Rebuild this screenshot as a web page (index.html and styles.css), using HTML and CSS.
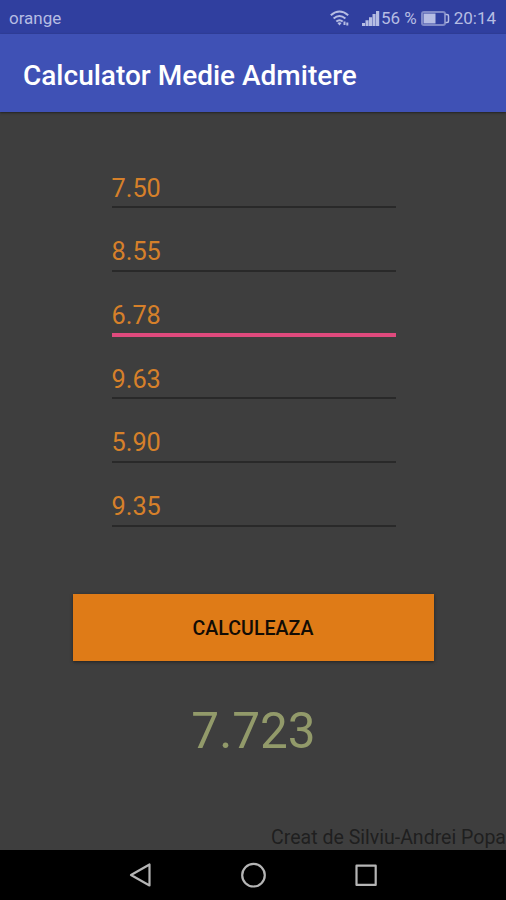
FILE: index.html
```html
<!DOCTYPE html>
<html lang="ro">
<head>
<meta charset="utf-8">
<title>Calculator Medie Admitere</title>
<link rel="stylesheet" href="styles.css">
</head>
<body>
<div class="screen">
  <div class="status-bar">
    <span class="carrier">orange</span>
    <svg class="wifi" width="20" height="16" viewBox="0 0 20 16" fill="none" stroke="currentColor" stroke-width="2">
      <path d="M.8 5.200Q9.500-2.200 18.200 5.200M3.600 8.500Q9.500 3.400 15.400 8.500M6.300 11.600Q9.500 8.800 12.700 11.600"/>
      <path d="M7.400 13L9.500 15.600L11.600 13Q9.500 11.700 7.400 13Z" fill="currentColor" stroke="none"/>
      <path d="M14.500 11.500V15M17.300 12.500V15.500" stroke-width="2"/>
    </svg>
    <svg class="signal" width="18" height="16" viewBox="0 0 18 16" fill="currentColor">
      <path d="M0 13h3v3H0zM3.500 10.300h3.100V16H3.500zM7 7.200h3.100V16H7zM10.500 4h3.100v12h-3.100zM14 1h3.200v15H14z"/>
    </svg>
    <span class="percent">56 %</span>
    <svg class="battery" width="29" height="15" viewBox="0 0 29 15">
      <rect x="1" y="1" width="23" height="13" rx="2" fill="none" stroke="currentColor" stroke-width="2" opacity=".6"/>
      <rect x="2.500" y="2.500" width="12" height="10" fill="currentColor"/>
      <path d="M24.500 3.500h1.500q1.500 0 1.500 1.500v5q0 1.500-1.500 1.500h-1.500" fill="none" stroke="currentColor" stroke-width="1.500"/>
    </svg>
    <span class="clock">20:14</span>
  </div>
  <header class="app-bar"><h1 class="title">Calculator Medie Admitere</h1></header>
  <main class="content">
    <div class="fields">
      <div class="field">7.50</div>
      <div class="field">8.55</div>
      <div class="field focused">6.78</div>
      <div class="field">9.63</div>
      <div class="field">5.90</div>
      <div class="field">9.35</div>
    </div>
    <button class="calculate" type="button">CALCULEAZA</button>
    <div class="result">7.723</div>
    <div class="credit">Creat de Silviu-Andrei Popa</div>
  </main>
  <nav class="nav-bar">
    <svg width="26" height="26" viewBox="0 0 26 26"><path d="M22.500 2.500V23.500L4 13Z"/></svg>
    <svg width="26" height="26" viewBox="0 0 26 26"><circle cx="13.500" cy="13.200" r="11.300"/></svg>
    <svg width="26" height="26" viewBox="0 0 26 26"><path d="M3.500 3.700H22.700V22.900H3.500Z"/></svg>
  </nav>
</div>
</body>
</html>
```
FILE: styles.css
```css
* { box-sizing: border-box; }
body { margin: 0; font-family: Roboto, sans-serif; }
.screen { width: 506px; height: 900px; display: flex; flex-direction: column; background: #3e3e3e; overflow: hidden; }
.status-bar { height: 34px; display: flex; align-items: center; padding: 2px 10px 0 9px; background: #303f9f; color: #b6bde3; font-size: 17px; }
.carrier { margin-right: auto; }
.wifi { margin-right: 12px; }
.signal { margin-right: 1px; }
.percent { margin-right: 4px; }
.battery { margin-right: 4px; }
.app-bar { height: 78px; display: flex; align-items: center; padding: 4px 23px 0; background: #3f51b5; box-shadow: 0 1px 2px #222; }
.title { margin: 0; color: #fff; font-size: 28px; font-weight: 500; white-space: nowrap; letter-spacing: 0; }
.content { flex: 1; display: flex; flex-direction: column; align-items: center; padding-top: 32.500px; }
.fields { width: 284px; margin-left: 1px; }
.field { height: 63.700px; padding-top: 29px; border-bottom: 2px solid #292929; color: #d6802a; font-size: 25.300px; line-height: 30px; }
.focused { position: relative; top: 1px; padding-top: 28px; border-bottom: 4px solid #e04a7d; }
.calculate { width: 361px; height: 67px; margin-top: 67px; padding: 3px 0 0; border: 0; background: #df7b17; color: #120c05; font: 500 19.600px Roboto, sans-serif; box-shadow: 0 1px 3px #222; }
.result { margin-top: 40px; padding-left: 1px; color: #929a6a; font-size: 49.500px; line-height: 60px; }
.credit { margin-top: auto; align-self: flex-end; color: #1f1f1f; font-size: 19.550px; line-height: 24px; white-space: nowrap; }
.nav-bar { height: 50px; display: flex; align-items: center; justify-content: center; gap: 87px; background: #000; }
.nav-bar svg { fill: none; stroke: #b5b5b5; stroke-width: 2.200; stroke-linejoin: round; }
```
